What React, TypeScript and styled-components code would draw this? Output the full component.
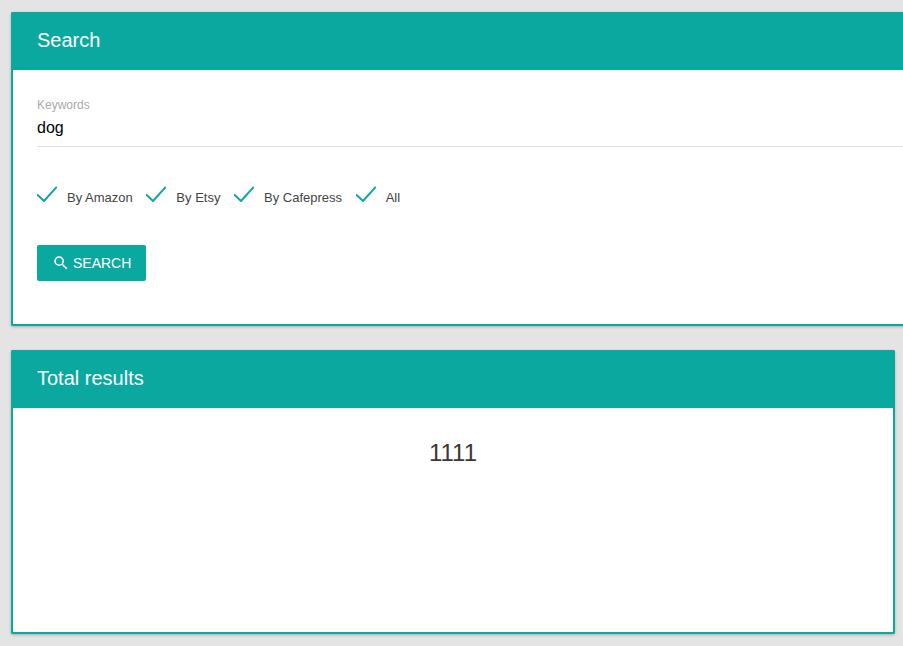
import React from 'react';
import styled, { createGlobalStyle } from 'styled-components';

const teal = '#0ba89f';

const GlobalStyle = createGlobalStyle`
  html, body {
    margin: 0;
    height: 100%;
    background: #e4e4e4;
    overflow: hidden;
    font-family: "Liberation Sans", Arial, sans-serif;
  }
`;

const Page = styled.div`
  display: flex;
  flex-direction: column;
  gap: 24px;
  padding: 12px 0 0 11px;
  width: 903px;
  height: 646px;
  box-sizing: border-box;
  overflow: hidden;
`;

const Card = styled.section<{ $width: number; $height: number }>`
  flex: none;
  display: flex;
  flex-direction: column;
  box-sizing: border-box;
  width: ${(p) => p.$width}px;
  height: ${(p) => p.$height}px;
  background: #fff;
  border: 2px solid ${teal};
  border-top: 0;
  border-radius: 2px;
  box-shadow: 0 1px 3px rgba(0, 0, 0, 0.25);
`;

const CardHeader = styled.h2`
  flex: none;
  box-sizing: border-box;
  height: 58px;
  margin: 0 -2px;
  padding: 0 0 0 26px;
  background: ${teal};
  border-radius: 2px 2px 0 0;
  color: #fff;
  font-size: 20px;
  font-weight: 400;
  line-height: 56px;
`;

const SearchBody = styled.div`
  display: flex;
  flex-direction: column;
  padding: 28px 0 0 24px;
`;

const Field = styled.div`
  display: flex;
  flex-direction: column;
  height: 49px;
  box-sizing: border-box;
  border-bottom: 1px solid #e0e0e0;
`;

const FieldLabel = styled.label`
  font-size: 12px;
  line-height: 14px;
  color: #aaaaaa;
`;

const FieldValue = styled.span`
  margin-top: 6px;
  font-size: 16px;
  line-height: 20px;
  color: #000;
`;

const CheckRow = styled.div`
  display: flex;
  align-items: flex-start;
  gap: 13.6px;
  margin-top: 39px;
  height: 24px;
`;

const CheckItem = styled.div`
  display: flex;
  align-items: flex-start;
`;

const CheckText = styled.span`
  margin: 4px 0 0 10px;
  font-size: 13px;
  line-height: 15px;
  color: #444;
`;

const SearchButton = styled.button`
  display: flex;
  align-items: center;
  align-self: flex-start;
  box-sizing: border-box;
  width: 109px;
  height: 36px;
  margin-top: 35px;
  padding: 0 0 0 15px;
  background: ${teal};
  color: #fff;
  border: 0;
  border-radius: 2px;
  font-family: inherit;
  font-size: 14px;
  font-weight: 400;
  text-transform: uppercase;
`;

const ButtonIcon = styled.svg`
  width: 18px;
  height: 18px;
  margin-right: 3px;
  fill: #fff;
`;

const ResultBody = styled.div`
  display: flex;
  justify-content: center;
  padding-top: 31px;
  font-size: 24px;
  line-height: 28px;
  color: #3e3535;
`;

function CheckMark() {
  return (
    <svg width="20" height="16" viewBox="0 0 20 16" fill="none">
      <path d="M0 8.5L7 15L19.8 0.8" stroke={teal} strokeWidth="2" />
    </svg>
  );
}

const sources = ['By Amazon', 'By Etsy', 'By Cafepress', 'All'];

export default function App() {
  return (
    <>
      <GlobalStyle />
      <Page>
        <Card $width={1000} $height={314}>
          <CardHeader>Search</CardHeader>
          <SearchBody>
            <Field>
              <FieldLabel>Keywords</FieldLabel>
              <FieldValue>dog</FieldValue>
            </Field>
            <CheckRow>
              {sources.map((name) => (
                <CheckItem key={name}>
                  <CheckMark />
                  <CheckText>{name}</CheckText>
                </CheckItem>
              ))}
            </CheckRow>
            <SearchButton>
              <ButtonIcon viewBox="0 0 24 24">
                <path d="M15.5 14h-.79l-.28-.27A6.47 6.47 0 0 0 16 9.5 6.5 6.5 0 1 0 9.5 16c1.61 0 3.09-.59 4.23-1.57l.27.28v.79l5 4.99L20.49 19l-4.99-5zm-6 0C7.01 14 5 11.99 5 9.5S7.01 5 9.5 5 14 7.01 14 9.5 11.99 14 9.5 14z" />
              </ButtonIcon>
              Search
            </SearchButton>
          </SearchBody>
        </Card>
        <Card $width={884} $height={284}>
          <CardHeader>Total results</CardHeader>
          <ResultBody>1111</ResultBody>
        </Card>
      </Page>
    </>
  );
}
